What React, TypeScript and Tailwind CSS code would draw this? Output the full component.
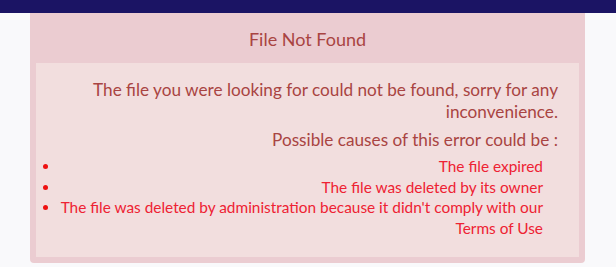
import React from "react";

const causes = [
  "The file expired",
  "The file was deleted by its owner",
  "The file was deleted by administration because it didn't comply with our Terms of Use",
];

const App: React.FC = () => {
  return (
    <div className="min-h-[267px] bg-[#f9f9fb] font-['Lato',sans-serif]">
      <div className="h-[13px] bg-[#1b1464]" />
      <div className="px-[30px] pr-[31px]">
        <div className="rounded-b-[4px] bg-[#ebccd1] px-[6px] pb-[6px]">
          <h2 className="pt-[16px] pb-[14px] text-center text-[18px] leading-[20px] text-[#a94442]">File Not Found</h2>
          <div className="bg-[#f2dede] pb-[19px] pl-[24px] pr-[21px] pt-[16px] text-right">
            <p className="text-[17.2px] leading-[22px] text-[#a94442]">
              The file you were looking for could not be found, sorry for any inconvenience.
            </p>
            <p className="mt-[6px] text-[17.2px] leading-[22px] text-[#a94442]">Possible causes of this error could be :</p>
            <ul className="mt-[5px] list-disc pr-[15px] text-[15.4px] leading-[20.5px] text-[#ee2233] marker:text-[#ee1111]">
              {causes.map((c) => (
                <li key={c}>{c}</li>
              ))}
            </ul>
          </div>
        </div>
      </div>
    </div>
  );
};

export default App;
